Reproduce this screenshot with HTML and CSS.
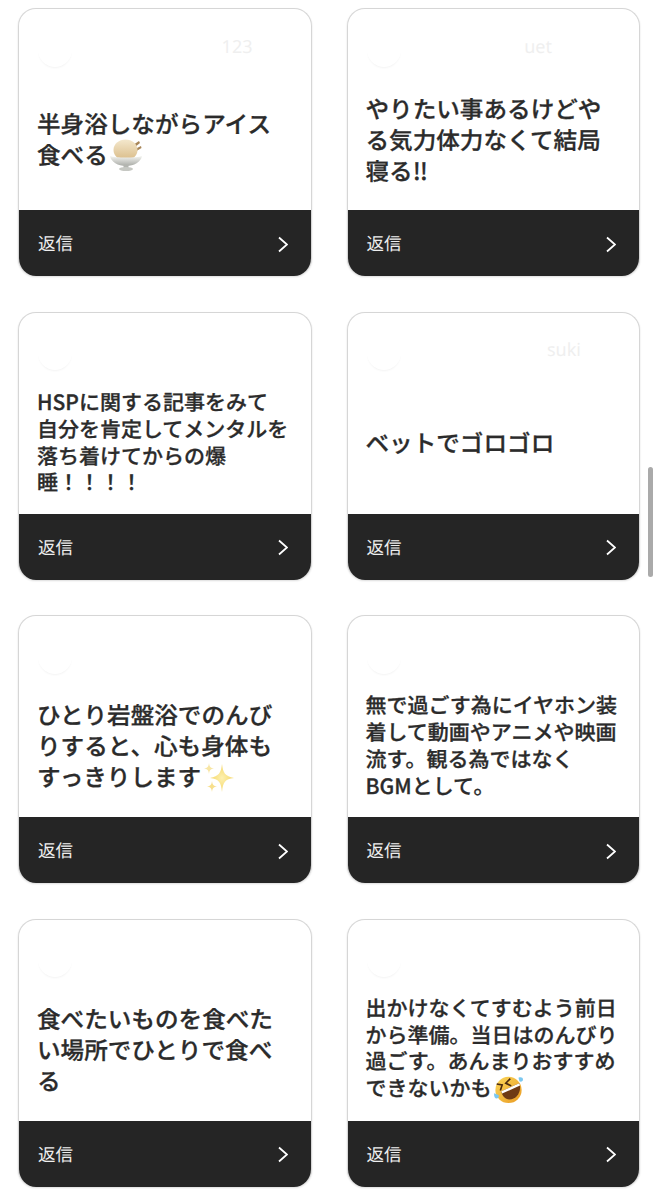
FILE: index.html
```html
<!DOCTYPE html>
<html lang="ja">
  <head>
    <meta charset="UTF-8" />
    <meta name="viewport" content="width=device-width, initial-scale=1.0" />
    <title>返信</title>
    <link rel="stylesheet" href="styles.css">
  </head>

  <body>
    <svg class="defs" width="0" height="0">
      <defs>
        <linearGradient id="scoop" x1="0" y1="0" x2="0" y2="1"><stop offset="0" stop-color="#f4e8cd"/><stop offset="1" stop-color="#d9bb87"/></linearGradient>
        <linearGradient id="bowl" x1="0" y1="0" x2="0" y2="1"><stop offset="0" stop-color="#f4f5f1"/><stop offset="1" stop-color="#a9aba6"/></linearGradient>
        <radialGradient id="star" cx="0.5" cy="0.5" r="0.5"><stop offset="0" stop-color="#fdf0b0"/><stop offset="1" stop-color="#f5d768"/></radialGradient>
        <linearGradient id="face" x1="0" y1="0" x2="1" y2="1"><stop offset="0" stop-color="#fbd75a"/><stop offset="1" stop-color="#e99a22"/></linearGradient>
      </defs>
    </svg>

    <div class="card-grid">
      <div class="card">
        <div class="card-head"><span class="avatar"></span><span class="username">123</span></div>
        <p class="card-text">半身浴しながらアイス食べる<svg class="emoji" viewBox="0 0 32 32"><path d="M23 6l6-4 1 2-5 4zM25 10l6-3 .5 2-5 3z" fill="#a88658"/><ellipse cx="15.500" cy="11" rx="12" ry="10.500" fill="url(#scoop)"/><path d="M0 17c5 2 27 2 32 0-1 6-8 10-16 10S1 23 0 17z" fill="url(#bowl)"/><path d="M13.500 26h5v3h-5z" fill="#b3b5b0"/><ellipse cx="16" cy="30" rx="7" ry="2" fill="#c6c8c3"/></svg></p>
        <div class="card-reply"><span>返信</span><svg class="chevron" viewBox="0 0 10 16"><path d="M1 1l8 7-8 7"/></svg></div>
      </div>

      <div class="card">
        <div class="card-head"><span class="avatar"></span><span class="username far">uet</span></div>
        <p class="card-text">やりたい事あるけどやる気力体力なくて結局寝る‼</p>
        <div class="card-reply"><span>返信</span><svg class="chevron" viewBox="0 0 10 16"><path d="M1 1l8 7-8 7"/></svg></div>
      </div>

      <div class="card">
        <div class="card-head"><span class="avatar"></span></div>
        <p class="card-text small">HSPに関する記事をみて<br>自分を肯定してメンタルを<br>落ち着けてからの爆<br>睡！！！！</p>
        <div class="card-reply"><span>返信</span><svg class="chevron" viewBox="0 0 10 16"><path d="M1 1l8 7-8 7"/></svg></div>
      </div>

      <div class="card">
        <div class="card-head"><span class="avatar"></span><span class="username">suki</span></div>
        <p class="card-text">ベットでゴロゴロ</p>
        <div class="card-reply"><span>返信</span><svg class="chevron" viewBox="0 0 10 16"><path d="M1 1l8 7-8 7"/></svg></div>
      </div>

      <div class="card">
        <div class="card-head"><span class="avatar"></span></div>
        <p class="card-text">ひとり岩盤浴でのんびりすると、心も身体もすっきりします<svg class="emoji" viewBox="0 0 32 32"><path d="M19 3c1 9 3 12 12 14-9 1-11 4-12 14-1-10-3-13-12-14 9-2 11-5 12-14z" fill="url(#star)"/><path d="M6 2c.5 4 1.500 5 5 5.500-3.500.5-4.500 1.500-5 5.500-.5-4-1.500-5-5-5.500 3.500-.5 4.500-1.500 5-5.500z" fill="#f8e6a4"/><path d="M9 20c.5 4 1.500 5 5 5.500-3.500.5-4.500 1.500-5 5.500-.5-4-1.500-5-5-5.500 3.500-.5 4.500-1.500 5-5.500z" fill="#f7df8c"/></svg></p>
        <div class="card-reply"><span>返信</span><svg class="chevron" viewBox="0 0 10 16"><path d="M1 1l8 7-8 7"/></svg></div>
      </div>

      <div class="card">
        <div class="card-head"><span class="avatar"></span></div>
        <p class="card-text small">無で過ごす為にイヤホン装<br>着して動画やアニメや映画<br>流す。観る為ではなく<br>BGMとして。</p>
        <div class="card-reply"><span>返信</span><svg class="chevron" viewBox="0 0 10 16"><path d="M1 1l8 7-8 7"/></svg></div>
      </div>

      <div class="card">
        <div class="card-head"><span class="avatar"></span></div>
        <p class="card-text">食べたいものを食べたい場所でひとりで食べる</p>
        <div class="card-reply"><span>返信</span><svg class="chevron" viewBox="0 0 10 16"><path d="M1 1l8 7-8 7"/></svg></div>
      </div>

      <div class="card">
        <div class="card-head"><span class="avatar"></span></div>
        <p class="card-text small">出かけなくてすむよう前日<br>から準備。当日はのんびり<br>過ごす。あんまりおすすめ<br>できないかも<svg class="emoji low" viewBox="0 0 32 32"><circle cx="16" cy="16.500" r="14.500" fill="url(#face)"/><path d="M8 18L28 9c3 9-3 18-11 18-5 0-8-4-9-9z" fill="#6f3a14"/><path d="M8 18L28 9l.7 2.500L9 20.500z" fill="#ffffff"/><path d="M3 10l6 1-2 6M18 4l-5 5 6 3" fill="none" stroke="#4a2a10" stroke-width="1.800"/><path d="M0 20c0 4 1 6 3 6s3-2 2-4zM27 3c3-1 5 0 5 2s-2 3-4 2z" fill="#7cc8f0"/></svg></p>
        <div class="card-reply"><span>返信</span><svg class="chevron" viewBox="0 0 10 16"><path d="M1 1l8 7-8 7"/></svg></div>
      </div>
    </div>

    <div class="scrollbar"></div>
  </body>
</html>
```

FILE: styles.css
```css
* {
  margin: 0;
  padding: 0;
  box-sizing: border-box;
}
body {
  font-family: "Noto Sans CJK JP", "Noto Sans", sans-serif;
  background-color: #ffffff;
  color: #2b2b2b;
  width: 657px;
  height: 1200px;
  overflow: hidden;
  position: relative;
  text-rendering: geometricPrecision;
}
.defs {
  display: block;
}
.card-grid {
  display: grid;
  grid-template-columns: 293.5px 293.5px;
  column-gap: 35px;
  row-gap: 35.5px;
  padding: 8px 0 0 18px;
}
.card {
  height: 268px;
  display: flex;
  flex-direction: column;
  background-color: #ffffff;
  border: 1px solid #d6d6d6;
  border-bottom: none;
  border-radius: 18px;
  overflow: hidden;
  box-shadow: 0 1px 2px rgba(0, 0, 0, 0.14);
}
.card-head {
  height: 60px;
  flex: none;
  display: flex;
  align-items: center;
  gap: 10px;
  padding: 21px 19px 0;
}
.avatar {
  width: 34px;
  height: 34px;
  border-radius: 50%;
  background-color: #ffffff;
  box-shadow: 0 2px 3px -2px #e4e4e4;
}
.username {
  margin-left: auto;
  margin-right: 39px;
  margin-bottom: 6px;
  font-family: "Noto Sans", sans-serif;
  font-size: 18px;
  color: #efefef;
}
.username.far {
  margin-right: 68px;
}
.card-text {
  flex: 1;
  display: block;
  align-content: center;
  padding: 0 18px 1px;
  font-size: 23.6px;
  font-weight: 500;
  line-height: 31px;
  -webkit-text-stroke: 0.3px #2b2b2b;
}
.card-text.small {
  font-size: 21px;
  line-height: 26.8px;
}
.emoji {
  width: 32px;
  height: 32px;
  margin-left: 2px;
  vertical-align: -7px;
}
.emoji.low {
  width: 29px;
  height: 29px;
  vertical-align: -8px;
}
.card-reply {
  height: 66px;
  flex: none;
  display: flex;
  align-items: center;
  justify-content: space-between;
  padding: 0 23px 0 19px;
  background-color: #252525;
  color: #eeeeee;
  font-size: 17.5px;
}
.card-reply span {
  margin-top: 1px;
}
.chevron {
  width: 10px;
  height: 17px;
  margin-top: 2px;
  fill: none;
  stroke: #ffffff;
  stroke-width: 1.8;
}
.scrollbar {
  position: absolute;
  left: 648px;
  top: 467px;
  width: 5px;
  height: 110px;
  border-radius: 3px;
  background-color: #aaaaaa;
}
```
